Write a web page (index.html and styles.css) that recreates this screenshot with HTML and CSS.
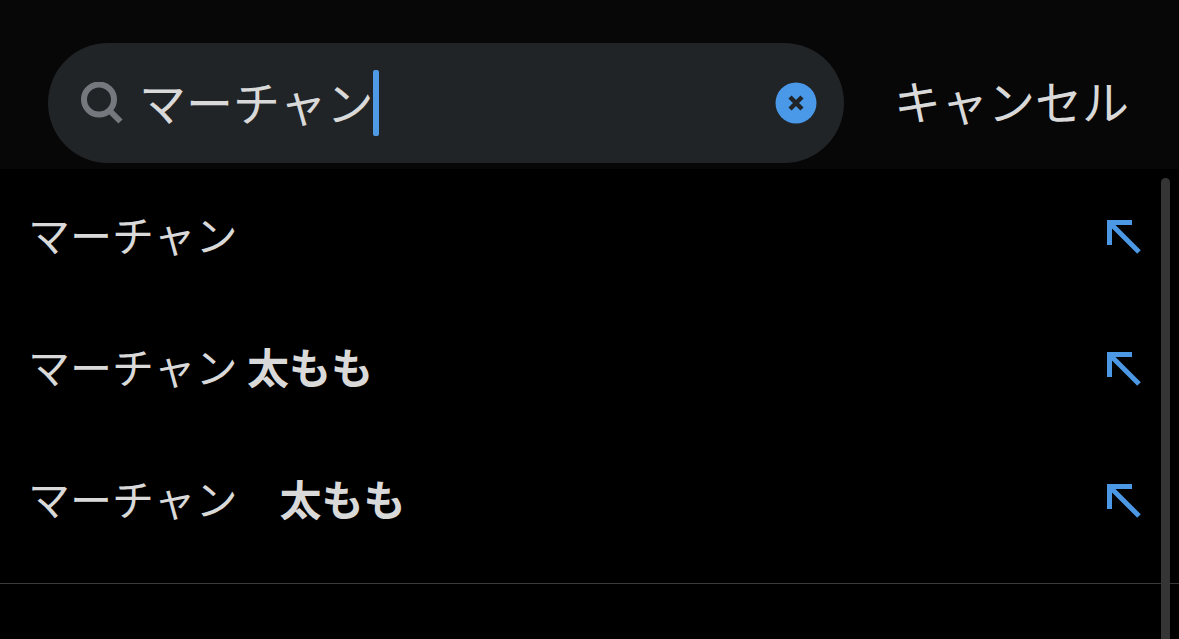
FILE: index.html
```html
<!DOCTYPE html>
<html lang="ja">
<head>
  <meta charset="UTF-8">
  <meta name="viewport" content="width=device-width, initial-scale=1.0">
  <title>検索</title>
  <link rel="stylesheet" href="styles.css">
</head>
<body>
  <header class="header">
    <form class="search-box" role="search">
      <label class="search-label" for="q" aria-label="検索">
        <svg class="search-icon" viewBox="0 0 42 42">
          <circle cx="18" cy="17.500" r="15" fill="none" stroke="currentColor" stroke-width="6"/>
          <path d="M28 28 L39.500 39.500" stroke="currentColor" stroke-width="6"/>
        </svg>
      </label>
      <div class="search-field">
        <input class="search-input" type="text" id="q" value="マーチャン" autocomplete="off">
        <span class="caret"></span>
      </div>
      <button class="clear-button" type="reset" aria-label="消去">
        <svg class="clear-icon" viewBox="0 0 42 42">
          <circle cx="21" cy="21" r="20.500" fill="#4a99e9"/>
          <path d="M15 15 L27 27 M27 15 L15 27" stroke="#212427" stroke-width="4.500"/>
        </svg>
      </button>
    </form>
    <button class="cancel-button" type="button">キャンセル</button>
  </header>

  <main class="results">
    <ul class="suggestions">
      <li class="suggestion">
        <a class="suggestion-text" href="#">マーチャン</a>
        <button class="fill-button" type="button" aria-label="入力">
          <svg class="arrow" viewBox="0 0 34 34"><path d="M25 2.500 H2.500 V25 M3 3 L32 32"/></svg>
        </button>
      </li>
      <li class="suggestion">
        <a class="suggestion-text" href="#">マーチャン <b>太もも</b></a>
        <button class="fill-button" type="button" aria-label="入力">
          <svg class="arrow" viewBox="0 0 34 34"><path d="M25 2.500 H2.500 V25 M3 3 L32 32"/></svg>
        </button>
      </li>
      <li class="suggestion">
        <a class="suggestion-text" href="#">マーチャン　<b>太もも</b></a>
        <button class="fill-button" type="button" aria-label="入力">
          <svg class="arrow" viewBox="0 0 34 34"><path d="M25 2.500 H2.500 V25 M3 3 L32 32"/></svg>
        </button>
      </li>
    </ul>
    <div class="scroll-thumb"></div>
  </main>
</body>
</html>
```

FILE: styles.css
```css
* { box-sizing: border-box; }
html, body { height: 100%; margin: 0; padding: 0; }
body {
  display: flex;
  flex-direction: column;
  background: #000;
  color: #d9d9d9;
  font-family: "Noto Sans CJK JP", sans-serif;
  overflow: hidden;
}
button {
  padding: 0;
  border: none;
  background: none;
  color: inherit;
  font: inherit;
  cursor: pointer;
}
svg { display: block; }

/* header */
.header {
  display: flex;
  align-items: center;
  gap: 50px;
  padding: 43px 50px 6px 48px;
  background: #070707;
}
.search-box {
  flex: 1;
  min-width: 0;
  height: 120px;
  display: flex;
  align-items: center;
  padding: 0 27px 0 33px;
  border-radius: 60px;
  background: #212427;
}
.search-label { color: #75797d; }
.search-icon { width: 42px; height: 42px; }
.search-field {
  position: relative;
  flex: 1;
  min-width: 0;
  margin: 0 16px;
  font-size: 47px;
}
.search-input {
  display: block;
  width: 100%;
  height: 66px;
  padding: 0 0 6px;
  border: none;
  outline: none;
  background: none;
  color: inherit;
  font: inherit;
  caret-color: transparent;
}
.caret {
  position: absolute;
  top: 0;
  left: 5em;
  width: 6px;
  height: 66px;
  margin-left: -1px;
  border-radius: 2px;
  background: #4f9ae6;
}
.clear-icon { width: 42px; height: 42px; }
.cancel-button {
  padding-bottom: 6px;
  font-size: 47px;
  line-height: 66px;
  white-space: nowrap;
}

/* suggestions */
.results {
  position: relative;
  flex: 1;
}
.suggestions {
  list-style: none;
  margin: 0;
  padding: 2px 0 16px;
  border-bottom: 1px solid #38393b;
}
.suggestion {
  display: flex;
  align-items: center;
  justify-content: space-between;
  height: 132px;
  padding: 0 38px 0 28px;
}
.suggestion-text {
  padding-bottom: 6px;
  color: inherit;
  font-size: 42px;
  line-height: 60px;
  text-decoration: none;
}
.arrow {
  width: 34px;
  height: 34px;
  fill: none;
  stroke: #4c98e5;
  stroke-width: 5;
}
.scroll-thumb {
  position: absolute;
  top: 9px;
  right: 9px;
  bottom: 0;
  width: 9px;
  border-radius: 5px 5px 0 0;
  background: #353535;
}
```
